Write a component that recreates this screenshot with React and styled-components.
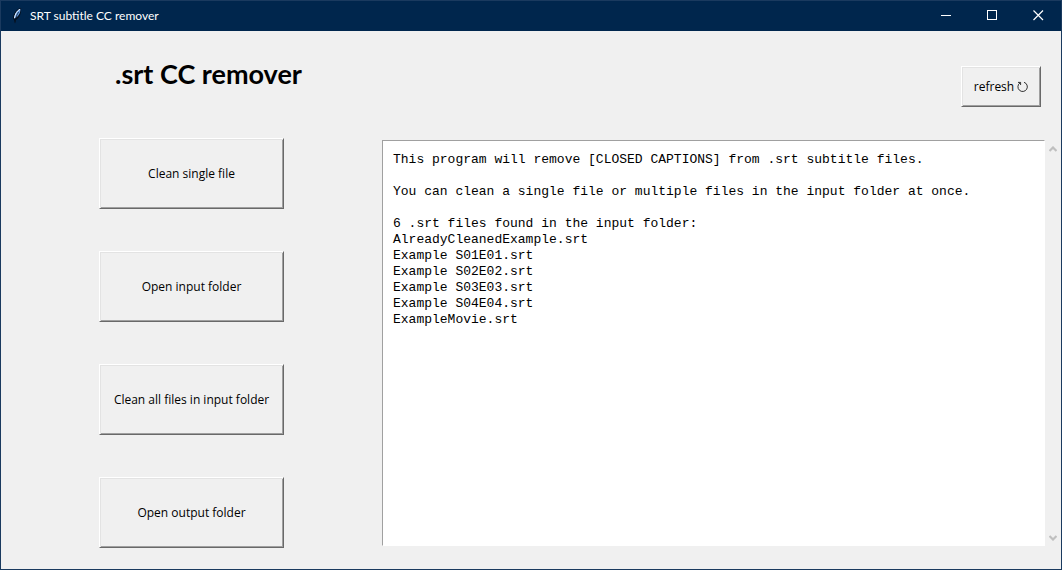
import React from "react";
import styled, { createGlobalStyle } from "styled-components";

const GlobalStyle = createGlobalStyle`
  *, *::before, *::after { box-sizing: border-box; }
  body { margin: 0; background: #f0f0f0; }
`;

const titleFont = `Lato, "Noto Sans", sans-serif`;
const labelFont = `"Open Sans", "Noto Sans", sans-serif`;

const Window = styled.div`
  display: flex;
  flex-direction: column;
  min-height: 100vh;
  border: 1px solid #1a3a5f;
  background: #f0f0f0;
  color: #000;
`;

const TitleBar = styled.header`
  display: flex;
  align-items: center;
  height: 30px;
  padding-left: 8px;
  background: #00264d;
  color: #fff;
`;

const AppIcon = styled.svg`
  width: 16px;
  height: 16px;
`;

const WindowTitle = styled.span`
  flex: 1;
  padding-left: 5px;
  font: 12px/16px ${titleFont};
`;

const CaptionButton = styled.button`
  display: grid;
  place-items: center;
  width: 46px;
  height: 30px;
  padding: 0 0 2px;
  border: 0;
  background: transparent;
  color: #fff;
  svg { width: 11px; height: 11px; }
`;

const Heading = styled.div`
  display: flex;
  justify-content: space-between;
  align-items: flex-start;
  height: 107px;
  padding: 25px 20px 0 114px;
`;

const Title = styled.h1`
  margin: 0;
  font: bold 27px/36px ${titleFont};
`;

const RaisedButton = styled.button`
  padding: 0 8px;
  border: 1px solid;
  border-color: #fff #696969 #696969 #fff;
  background: #f0f0f0;
  box-shadow: inset 1px 1px #e3e3e3, inset -1px -1px #a0a0a0;
  color: #000;
  font: 12px/16px ${labelFont};
  white-space: nowrap;
`;

const RefreshButton = styled(RaisedButton)`
  display: flex;
  align-items: center;
  justify-content: center;
  gap: 3px;
  width: 80px;
  height: 41px;
  margin-top: 10px;
  svg { width: 11px; height: 12px; }
`;

const Content = styled.main`
  display: grid;
  grid-template-columns: 185px minmax(0, 1fr);
  column-gap: 98px;
  flex: 1;
  padding: 0 0 21px 98px;
`;

const Actions = styled.nav`
  display: flex;
  flex-direction: column;
  gap: 42px;
`;

const ActionButton = styled(RaisedButton)`
  height: 71px;
`;

const OutputPane = styled.section`
  display: flex;
  padding: 2px 0;
`;

const Output = styled.textarea`
  flex: 1;
  min-width: 0;
  padding: 11px 10px;
  border: 1px solid;
  border-color: #a0a0a0 #fff #fff #a0a0a0;
  border-radius: 0;
  outline: 0;
  resize: none;
  overflow: hidden;
  background: #fff;
  color: #000;
  font: 13px/16px "Liberation Mono", monospace;
`;

const ScrollBar = styled.div`
  display: flex;
  flex-direction: column;
  justify-content: space-between;
  width: 16px;
`;

const ScrollArrow = styled.button`
  display: grid;
  place-items: center;
  height: 17px;
  padding: 0;
  border: 0;
  background: transparent;
  color: #bfbfbf;
  svg { width: 8px; height: 6px; }
`;

const actions = [
  "Clean single file",
  "Open input folder",
  "Clean all files in input folder",
  "Open output folder",
];

const message = `This program will remove [CLOSED CAPTIONS] from .srt subtitle files.

You can clean a single file or multiple files in the input folder at once.

6 .srt files found in the input folder:
AlreadyCleanedExample.srt
Example S01E01.srt
Example S02E02.srt
Example S03E03.srt
Example S04E04.srt
ExampleMovie.srt`;

function Feather() {
  return (
    <AppIcon viewBox="0 0 16 16" aria-hidden="true">
      <path d="M12 0 C8 0.5 4.5 5 4 10 L5 12 L6 15.5 L7 12 C10.5 10 12.6 5 12 0Z" fill="#04101f" />
      <path d="M11.4 0.8 C8 2 5.4 6 5.2 10.8 C9 9.4 11.8 4.5 11.4 0.8Z" fill="#6fa8ee" />
      <path d="M10.9 1.2 C8 2.8 6 6 5.5 10" fill="none" stroke="#e5f0ff" strokeWidth="1" />
      <path d="M9.8 3.8 C8.4 6 7 8 6 14.5" fill="none" stroke="#061426" strokeWidth="0.9" />
    </AppIcon>
  );
}

export default function App() {
  return (
    <>
      <GlobalStyle />
      <Window>
        <TitleBar>
          <Feather />
          <WindowTitle>SRT subtitle CC remover</WindowTitle>
          <CaptionButton aria-label="Minimize">
            <svg viewBox="0 0 11 11"><path d="M0 5.5H10" stroke="currentColor" /></svg>
          </CaptionButton>
          <CaptionButton aria-label="Maximize">
            <svg viewBox="0 0 11 11"><rect x="0.5" y="0.5" width="9" height="9" fill="none" stroke="currentColor" /></svg>
          </CaptionButton>
          <CaptionButton aria-label="Close">
            <svg viewBox="0 0 11 11"><path d="M0.5 0.5L10 10M10 0.5L0.5 10" stroke="currentColor" strokeWidth="1.2" /></svg>
          </CaptionButton>
        </TitleBar>
        <Heading>
          <Title>.srt CC remover</Title>
          <RefreshButton>
            refresh
            <svg viewBox="0 0 11 12" fill="none" stroke="currentColor" aria-hidden="true">
              <path d="M7 1.3 A4.7 4.7 0 1 1 3 1.9 M1 1.4H3.6V4" strokeWidth="0.8" />
            </svg>
          </RefreshButton>
        </Heading>
        <Content>
          <Actions aria-label="Actions">
            {actions.map((label) => (
              <ActionButton key={label}>{label}</ActionButton>
            ))}
          </Actions>
          <OutputPane>
            <Output aria-label="Program output" readOnly spellCheck={false} value={message} />
            <ScrollBar>
              <ScrollArrow aria-label="Scroll up">
                <svg viewBox="0 0 8 6"><path d="M0.5 5L4 1.5L7.5 5" fill="none" stroke="currentColor" strokeWidth="2.2" /></svg>
              </ScrollArrow>
              <ScrollArrow aria-label="Scroll down">
                <svg viewBox="0 0 8 6"><path d="M0.5 1L4 4.5L7.5 1" fill="none" stroke="currentColor" strokeWidth="2.2" /></svg>
              </ScrollArrow>
            </ScrollBar>
          </OutputPane>
        </Content>
      </Window>
    </>
  );
}
